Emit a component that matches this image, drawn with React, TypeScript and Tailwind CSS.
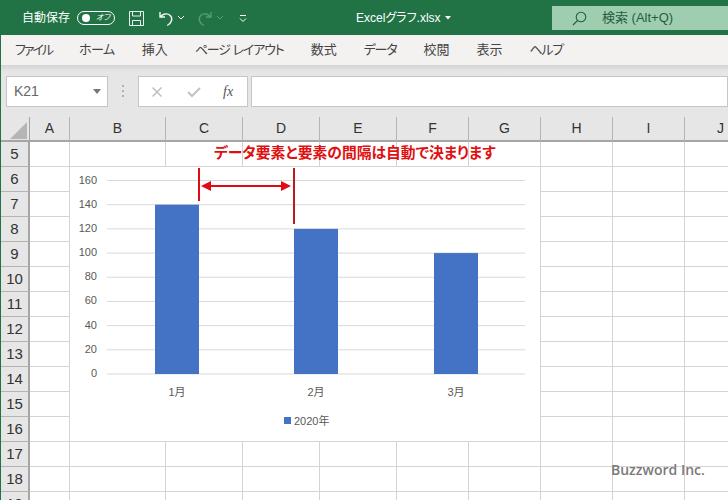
const FONT = "[font-family:'Liberation_Sans','Noto_Sans_CJK_JP',sans-serif] [font-feature-settings:'palt']";

const TABS = [
  { label: 'ファイル', tracking: 'tracking-[-2px]' },
  { label: 'ホーム', tracking: 'tracking-[-0.5px]' },
  { label: '挿入', tracking: 'tracking-normal' },
  { label: 'ページ レイアウト', tracking: 'tracking-[-1.1px]' },
  { label: '数式', tracking: 'tracking-normal' },
  { label: 'データ', tracking: 'tracking-[-1.2px]' },
  { label: '校閲', tracking: 'tracking-normal' },
  { label: '表示', tracking: 'tracking-normal' },
  { label: 'ヘルプ', tracking: 'tracking-[-1.3px]' },
];

const COLUMNS = [
  { label: 'A', width: 'w-[40px]' },
  { label: 'B', width: 'w-[96px]' },
  { label: 'C', width: 'w-[77px]' },
  { label: 'D', width: 'w-[77px]' },
  { label: 'E', width: 'w-[77px]' },
  { label: 'F', width: 'w-[72px]' },
  { label: 'G', width: 'w-[72px]' },
  { label: 'H', width: 'w-[72px]' },
  { label: 'I', width: 'w-[72px]' },
  { label: 'J', width: 'w-[72px]' },
];

const ROWS = [5, 6, 7, 8, 9, 10, 11, 12, 13, 14, 15, 16, 17, 18, 19];
const TICKS = [160, 140, 120, 100, 80, 60, 40, 20, 0];
const BARS = [
  { label: '1月', x: 155, value: 140 },
  { label: '2月', x: 294, value: 120 },
  { label: '3月', x: 434, value: 100 },
];

const AXIS_TOP = 180.5;
const AXIS_BOTTOM = 374;
const valueY = (value: number) => AXIS_BOTTOM - (value / 160) * (AXIS_BOTTOM - AXIS_TOP);

function TitleBar() {
  return (
    <div className="flex h-[35px] items-start bg-[#217346] text-white">
      <span className="mt-[9px] ml-[22px] w-[48px] text-[12px] leading-[18px] whitespace-nowrap">自動保存</span>
      <div className="mt-[11px] ml-[7px] flex h-[14px] w-[38px] items-center rounded-full border border-white pl-[4px]">
        <span className="h-[8px] w-[8px] rounded-full bg-white" />
        <span className="ml-[6px] text-[8px] leading-none italic">オフ</span>
      </div>
      <svg className="mt-[10px] ml-[13px]" width="17" height="17" viewBox="0 0 17 17" fill="none" stroke="#e8f2ec" strokeWidth="1">
        <path d="M1.5 1.5h14v14h-14z" />
        <path d="M4.5 1.5v4.5h8v-4.5M4.5 15.5v-5h8v5" />
      </svg>
      <svg className="mt-[10px] ml-[13px]" width="16" height="18" viewBox="0 0 16 18" fill="none" stroke="#f2f7f4" strokeWidth="1.4">
        <path d="M2 2v5h5M2.2 7c2-3 7-4.5 10-1.5 3 3 1.5 7.500-3 10" />
      </svg>
      <svg className="mt-[15px] ml-[3px]" width="8" height="5" viewBox="0 0 8 5" fill="none" stroke="#fff">
        <path d="M1 1l3 3 3-3" />
      </svg>
      <svg className="mt-[10px] ml-[12px]" width="16" height="18" viewBox="0 0 16 18" fill="none" stroke="#5c9a78" strokeWidth="1.3">
        <path d="M14 2v5h-5M13.800 7c-2-3-7-4.500-10-1.500-3 3-1.500 7.500 3 10" />
      </svg>
      <svg className="mt-[15px] ml-[3px]" width="8" height="5" viewBox="0 0 8 5" fill="none" stroke="#5c9a78">
        <path d="M1 1l3 3 3-3" />
      </svg>
      <svg className="mt-[14px] ml-[15px]" width="8" height="9" viewBox="0 0 8 9" fill="none" stroke="#fff">
        <path d="M1 1.500h6" />
        <path d="M1 4.500l3 3 3-3" />
      </svg>
      <span className="mt-[9px] ml-[109px] w-[82px] text-[12px] leading-[18px] whitespace-nowrap">Excelグラフ.xlsx</span>
      <svg className="mt-[16px] ml-[7px]" width="6" height="4" viewBox="0 0 6 4" fill="#fff">
        <path d="M0 0h6L3 3.500z" />
      </svg>
      <div className="mt-[6px] ml-[101px] flex h-[24px] flex-1 items-center bg-[#9fcdb0] pl-[20px] text-[#1f5f3d]">
        <svg width="15" height="15" viewBox="0 0 15 15" fill="none" stroke="#1f5f3d" strokeWidth="1.100">
          <circle cx="9" cy="6" r="4.800" />
          <path d="M5.500 9.500L1 14" />
        </svg>
        <span className="ml-[15px] text-[13px] whitespace-nowrap">検索 (Alt+Q)</span>
      </div>
    </div>
  );
}

function MenuBar() {
  return (
    <div className="flex h-[30px] items-center gap-[27px] bg-[#f3f2f1] pl-[14px] text-[13px] text-[#444444]">
      {TABS.map((tab) => (
        <span key={tab.label} className={`${tab.tracking} whitespace-nowrap`}>
          {tab.label}
        </span>
      ))}
    </div>
  );
}

function FormulaBar() {
  return (
    <div className="flex h-[52px] items-start bg-gradient-to-b from-[#d4d4d4] from-0% to-[#e6e6e6] to-[12%] pt-[11px]">
      <div className="ml-[5px] flex h-[31px] w-[102px] items-center justify-between border border-[#c6c6c6] bg-white pr-[6px] pl-[7px] text-[14px] text-[#666666]">
        <span>K21</span>
        <svg width="8" height="5" viewBox="0 0 8 5" fill="#777777">
          <path d="M0 0h8L4 5z" />
        </svg>
      </div>
      <svg className="mt-[9px] ml-[14px]" width="2" height="12" viewBox="0 0 2 12" fill="#b0b0b0">
        <path d="M0 0h2v2H0zM0 5h2v2H0zM0 10h2v2H0z" />
      </svg>
      <div className="ml-[14px] flex h-[31px] w-[110px] items-center border border-[#c6c6c6] bg-white">
        <svg className="ml-[12px]" width="12" height="12" viewBox="0 0 12 12" fill="none" stroke="#c2c2c2" strokeWidth="1.600">
          <path d="M1.500 1.500l9 9M10.500 1.500l-9 9" />
        </svg>
        <svg className="ml-[24px]" width="14" height="12" viewBox="0 0 14 12" fill="none" stroke="#c2c2c2" strokeWidth="2">
          <path d="M1 6l4 4 8-8" />
        </svg>
        <span className="ml-[22px] font-['Liberation_Serif',serif] text-[14px] text-[#555555] italic">fx</span>
      </div>
      <div className="ml-[3px] h-[31px] flex-1 border border-[#c6c6c6] bg-white" />
    </div>
  );
}

function ColumnHeaders() {
  return (
    <div className="flex h-[25px] bg-[#e6e6e6] text-[14px] leading-[23px] text-[#333333]">
      <div className="relative h-[25px] w-[29px] shrink-0 border-r border-b-2 border-[#a5a5a5]">
        <svg className="absolute top-[5px] left-[9px]" width="17" height="17" viewBox="0 0 17 17" fill="#b5b5b5">
          <path d="M17 0v17H0z" />
        </svg>
      </div>
      {COLUMNS.map((col) => (
        <div
          key={col.label}
          className={`${col.width} h-[25px] shrink-0 border-r border-b-2 border-r-[#b4b4b4] border-b-[#a5a5a5] text-center`}
        >
          {col.label}
        </div>
      ))}
    </div>
  );
}

function SheetRow({ row }: { row: number }) {
  return (
    <div className="flex h-[25px]">
      <div className="h-[25px] w-[29px] shrink-0 border-r-2 border-b border-r-[#a5a5a5] border-b-[#b4b4b4] bg-[#e6e6e6] text-center text-[15px] leading-[24px] text-[#333333]">
        {row}
      </div>
      {COLUMNS.map((col) => (
        <div key={col.label} className={`${col.width} h-[25px] shrink-0 border-r border-b border-[#d4d4d4] bg-white`} />
      ))}
    </div>
  );
}

function Chart() {
  return (
    <svg
      className="absolute top-[167px] left-[70px]"
      width="470"
      height="274"
      viewBox="70 167 470 274"
      fontSize="11"
      fill="#595959"
    >
      <rect x="70" y="167" width="470" height="274" fill="#ffffff" />
      {TICKS.map((tick) => (
        <g key={tick}>
          <line x1="107" x2="525" y1={valueY(tick)} y2={valueY(tick)} stroke="#d9d9d9" />
          <text x="97" y={valueY(tick) + 3} textAnchor="end">
            {tick}
          </text>
        </g>
      ))}
      {BARS.map((bar) => (
        <g key={bar.label}>
          <rect x={bar.x} y={valueY(bar.value)} width="44" height={AXIS_BOTTOM - valueY(bar.value)} fill="#4472c4" />
          <text x={bar.x + 22} y="396" textAnchor="middle">
            {bar.label}
          </text>
        </g>
      ))}
      <rect x="284" y="417" width="7" height="7" fill="#4472c4" />
      <text x="294" y="425">
        2020年
      </text>
    </svg>
  );
}

function Annotation() {
  return (
    <>
      <span className="absolute top-[143px] left-[214px] text-[14.800px] leading-[20px] font-bold whitespace-nowrap text-[#e01010]">
        データ要素と要素の間隔は自動で決まります
      </span>
      <svg className="absolute top-[166px] left-[196px]" width="102" height="60" viewBox="196 166 102 60" fill="none">
        <path d="M199 168v33" stroke="#e00b14" strokeWidth="2" />
        <path d="M294 168v56" stroke="#c0181f" strokeWidth="2" />
        <path d="M208 186h74" stroke="#e00b14" strokeWidth="2" />
        <path d="M201 186l10-5v10zM291 186l-10-5v10z" fill="#e00b14" />
      </svg>
    </>
  );
}

export default function App() {
  return (
    <div className={`${FONT} relative h-[500px] w-[728px] overflow-hidden bg-white`}>
      <TitleBar />
      <div className="border-l border-[#217346]">
        <MenuBar />
        <FormulaBar />
        <ColumnHeaders />
        {ROWS.map((row) => (
          <SheetRow key={row} row={row} />
        ))}
      </div>
      <Chart />
      <Annotation />
      <span className="absolute top-[459px] left-[611px] font-['Open_Sans',sans-serif] text-[14px] font-semibold whitespace-nowrap text-[#7a7a7a]">
        Buzzword Inc.
      </span>
    </div>
  );
}
